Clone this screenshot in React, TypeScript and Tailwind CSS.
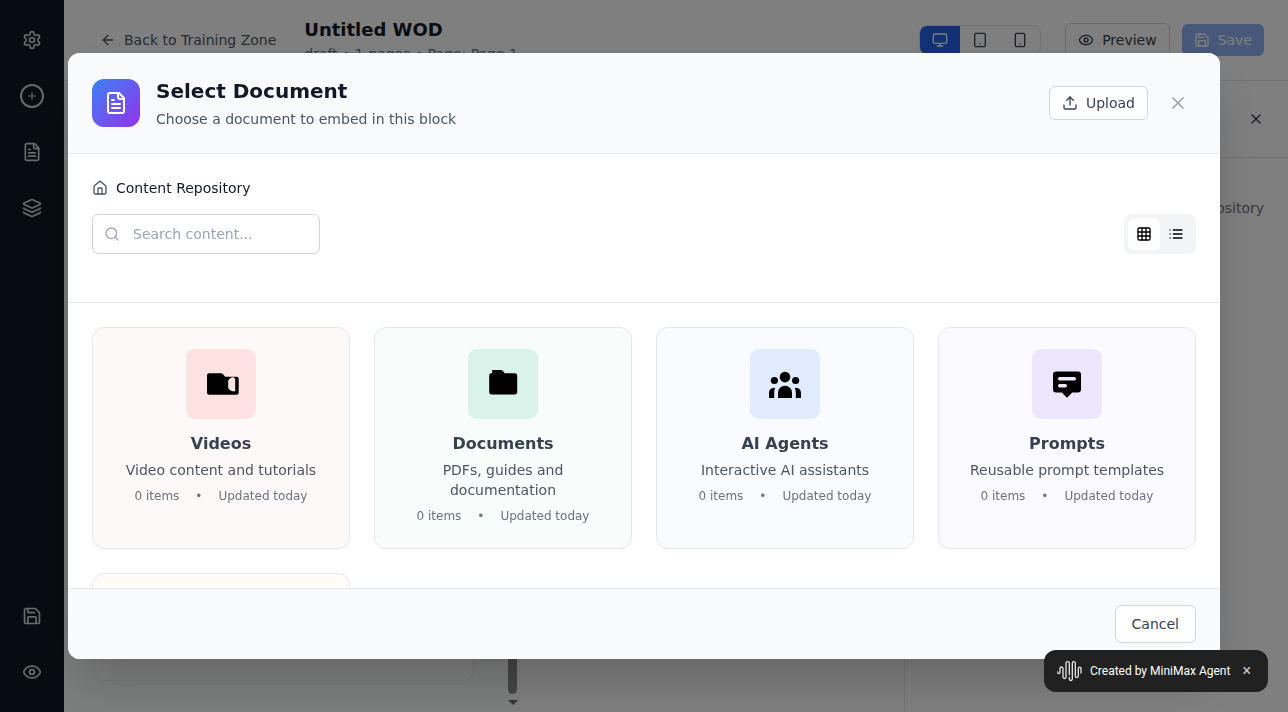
import type { ReactNode } from "react";
import {
  ArrowLeft,
  Eye,
  Grid3x3,
  House,
  Layers,
  Monitor,
  Plus,
  Save,
  Search,
  Smartphone,
  Tablet,
  Upload,
  X,
} from "lucide-react";

function StrokeIcon({ size, children }: { size: number; children: ReactNode }) {
  return (
    <svg
      width={size}
      height={size}
      viewBox="0 0 24 24"
      fill="none"
      stroke="currentColor"
      strokeWidth="2"
      strokeLinecap="round"
      strokeLinejoin="round"
    >
      {children}
    </svg>
  );
}

function FileIcon({ size }: { size: number }) {
  return (
    <StrokeIcon size={size}>
      <path d="M15 2H6a2 2 0 0 0-2 2v16a2 2 0 0 0 2 2h12a2 2 0 0 0 2-2V7Z" />
      <path d="M14 2v4a2 2 0 0 0 2 2h4" />
      <path d="M10 9H8" />
      <path d="M16 13H8" />
      <path d="M16 17H8" />
    </StrokeIcon>
  );
}

function GearIcon({ size }: { size: number }) {
  return (
    <StrokeIcon size={size}>
      <path d="M12.22 2h-.44a2 2 0 0 0-2 2v.18a2 2 0 0 1-1 1.73l-.43.25a2 2 0 0 1-2 0l-.15-.08a2 2 0 0 0-2.73.73l-.22.38a2 2 0 0 0 .73 2.73l.15.1a2 2 0 0 1 1 1.72v.51a2 2 0 0 1-1 1.74l-.15.09a2 2 0 0 0-.73 2.73l.22.38a2 2 0 0 0 2.73.73l.15-.08a2 2 0 0 1 2 0l.43.25a2 2 0 0 1 1 1.73V20a2 2 0 0 0 2 2h.44a2 2 0 0 0 2-2v-.18a2 2 0 0 1 1-1.73l.43-.25a2 2 0 0 1 2 0l.15.08a2 2 0 0 0 2.73-.73l.22-.39a2 2 0 0 0-.73-2.73l-.15-.08a2 2 0 0 1-1-1.74v-.5a2 2 0 0 1 1-1.74l.15-.09a2 2 0 0 0 .73-2.73l-.22-.38a2 2 0 0 0-2.73-.73l-.15.08a2 2 0 0 1-2 0l-.43-.25a2 2 0 0 1-1-1.73V4a2 2 0 0 0-2-2z" />
      <circle cx="12" cy="12" r="3" />
    </StrokeIcon>
  );
}

function ListIcon({ size }: { size: number }) {
  return (
    <StrokeIcon size={size}>
      <path d="M8 6h13M8 12h13M8 18h13M3 6h.01M3 12h.01M3 18h.01" />
    </StrokeIcon>
  );
}

function VideosIcon() {
  return (
    <path
      fillRule="evenodd"
      d="M23.2 24.300h11.900q1.200 0 2 .9l2 2.500h11.600q2 0 2 2v14q0 2-2 2h-27.500q-2.200 0-2.200-2V26.300q0-2 2.200-2zM46 28.200q-2.300 1-3.800 3.200v7.800q1.500 2.200 3.800 3h3.200V30.200q-.8-1.600-1.800-2z"
    />
  );
}

function DocumentsIcon() {
  return (
    <path d="M24.2 21h8.800q1 0 1.700.8l2 2.500h10q2.500 0 2.500 2.300v16.600q0 2.300-2.500 2.300h-23q-2.500 0-2.500-2.300V26.600q0-2.300 2-2.300h1z" />
  );
}

function AgentsIcon() {
  return (
    <>
      <circle cx="35" cy="28.1" r="5.3" />
      <circle cx="24.4" cy="31.5" r="3.6" />
      <circle cx="45.6" cy="31.5" r="3.6" />
      <path d="M28 49v-5.3a7 7 0 0 1 14 0V49z" />
      <path d="M19 49v-5q0-5.200 6.200-5.200q-1 2.200-1 4.900V49z" />
      <path d="M51 49v-5q0-5.200-6.200-5.200q1 2.200 1 4.900V49z" />
    </>
  );
}

function PromptsIcon() {
  return (
    <path
      fillRule="evenodd"
      d="M24 22.500h22q3 0 3 3v15q0 3-3 3h-5.700L35 48.800l-5.200-5.300H24q-3 0-3-3v-15q0-3 3-3zM27.700 28a1.750 1.750 0 0 0 0 3.500h14.600a1.750 1.750 0 0 0 0-3.500zM27.700 35a1.750 1.750 0 0 0 0 3.500h5.600a1.750 1.750 0 0 0 0-3.500z"
    />
  );
}

type Folder = {
  title: string;
  text: string;
  card: string;
  tile: string;
  icon: ReactNode;
};

const folders: Folder[] = [
  { title: "Videos", text: "Video content and tutorials", card: "bg-[#fdf9f9]", tile: "bg-[#fee2e2]", icon: <VideosIcon /> },
  { title: "Documents", text: "PDFs, guides and documentation", card: "bg-[#f8fcfb]", tile: "bg-[#daf3ea]", icon: <DocumentsIcon /> },
  { title: "AI Agents", text: "Interactive AI assistants", card: "bg-[#fafbff]", tile: "bg-[#e0ebfe]", icon: <AgentsIcon /> },
  { title: "Prompts", text: "Reusable prompt templates", card: "bg-[#fbfaff]", tile: "bg-[#ede7fe]", icon: <PromptsIcon /> },
];

function FolderCard({ folder }: { folder: Folder }) {
  return (
    <div className={`flex flex-col items-center rounded-xl border border-[#e5e7eb] px-6 pt-[21px] pb-6 text-center ${folder.card}`}>
      <div className={`h-[70px] w-[70px] shrink-0 rounded-[9px] ${folder.tile}`}>
        <svg viewBox="0 0 70 70" className="h-full w-full fill-black">
          {folder.icon}
        </svg>
      </div>
      <h3 className="mt-[13px] text-base font-semibold text-[#374151]">{folder.title}</h3>
      <p className="mt-1 text-sm text-[#4b5563]">{folder.text}</p>
      <div className="mt-2 flex gap-4 text-xs text-[#6b7280]">
        <span>0 items</span>
        <span>•</span>
        <span>Updated today</span>
      </div>
    </div>
  );
}

function Sidebar() {
  return (
    <aside className="flex w-16 shrink-0 flex-col items-center justify-between bg-[#0f1727] py-5 text-[#d1d5db]">
      <div className="flex flex-col gap-4">
        <button className="flex h-10 w-10 items-center justify-center"><GearIcon size={20} /></button>
        <button className="flex h-10 w-10 items-center justify-center">
          <span className="flex h-6 w-6 items-center justify-center rounded-full border-2 border-current">
            <Plus size={12} />
          </span>
        </button>
        <button className="flex h-10 w-10 items-center justify-center"><FileIcon size={20} /></button>
        <button className="flex h-10 w-10 items-center justify-center"><Layers size={20} /></button>
      </div>
      <div className="flex flex-col gap-4">
        <button className="flex h-10 w-10 items-center justify-center"><Save size={20} /></button>
        <button className="flex h-10 w-10 items-center justify-center"><Eye size={20} /></button>
      </div>
    </aside>
  );
}

function TopBar() {
  return (
    <header className="flex h-[81px] shrink-0 items-center justify-between border-b border-[#e5e7eb] bg-white px-6">
      <div className="flex items-center gap-4">
        <button className="flex items-center gap-2 px-3 text-sm text-[#4b5563]">
          <ArrowLeft size={16} />
          Back to Training Zone
        </button>
        <div>
          <h1 className="text-lg leading-7 font-semibold text-[#111827]">Untitled WOD</h1>
          <p className="text-sm text-[#6b7280]">draft • 1 pages • Page: Page 1</p>
        </div>
      </div>
      <div className="flex items-center text-sm text-[#374151]">
        <div className="mr-6 flex overflow-hidden rounded-lg border border-[#e5e7eb]">
          <button className="bg-[#2563eb] px-3 py-1.5 text-white"><Monitor size={16} /></button>
          <button className="px-3 py-1.5"><Tablet size={16} /></button>
          <button className="px-3 py-1.5"><Smartphone size={16} /></button>
        </div>
        <button className="mr-3 flex items-center gap-2 rounded-md border border-[#d1d5db] px-3 py-1.5">
          <Eye size={16} />
          Preview
        </button>
        <button className="flex items-center gap-2 rounded-md bg-[#2563eb] px-3 py-1.5 text-white opacity-50">
          <Save size={16} />
          Save
        </button>
      </div>
    </header>
  );
}

function Workspace() {
  return (
    <div className="flex min-h-0 flex-1">
      <section className="flex w-[456px] bg-[#f9fafb]">
        <div className="flex flex-1 flex-col pt-6 pr-8 pb-[31px] pl-[31px]">
          <div className="flex-1 rounded-lg border border-[#f0f1f3] bg-white" />
        </div>
        <div className="flex w-[15px] flex-col items-center justify-end gap-[6px] bg-[#fafafa] pb-[7px]">
          <div className="w-[9px] flex-1 rounded-full bg-[#8b8b8b]" />
          <svg width="10" height="5" viewBox="0 0 10 5" className="fill-[#6b6b6b]">
            <path d="M0 0h10L5 5z" />
          </svg>
        </div>
      </section>
      <section className="flex-1 bg-white" />
      <aside className="w-96 border-l border-[#e5e7eb] bg-white">
        <div className="flex h-[77px] items-center justify-end border-b border-[#e5e7eb] px-6 text-[#374151]">
          <X size={16} />
        </div>
        <p className="px-6 pt-10 text-right text-sm text-[#6b7280]">Content Repository</p>
      </aside>
    </div>
  );
}

function DocumentDialog() {
  return (
    <div role="dialog" className="flex h-[85vh] w-full max-w-6xl flex-col overflow-hidden rounded-xl bg-white shadow-2xl">
      <div className="flex shrink-0 items-center justify-between border-b border-[#e5e7eb] bg-[#f9fafb] p-6">
        <div className="flex items-center gap-4">
          <div className="flex h-12 w-12 items-center justify-center rounded-xl bg-linear-to-br/srgb from-[#3b82f6] to-[#9333ea] text-white">
            <FileIcon size={24} />
          </div>
          <div>
            <h2 className="text-xl font-semibold text-[#111827]">Select Document</h2>
            <p className="mt-1 text-sm text-[#4b5563]">Choose a document to embed in this block</p>
          </div>
        </div>
        <div className="flex items-center gap-3">
          <button className="flex items-center gap-2 rounded-md border border-[#d1d5db] bg-white px-3 py-1.5 text-sm text-[#374151]">
            <Upload size={16} />
            Upload
          </button>
          <button className="p-2 text-[#9ca3af]"><X size={20} /></button>
        </div>
      </div>

      <div className="shrink-0 border-b border-[#e5e7eb] p-6">
        <div className="mb-4 flex items-center gap-2 text-sm text-[#111827]">
          <House size={16} className="text-[#4b5563]" />
          Content Repository
        </div>
        <div className="mb-6 flex items-center justify-between">
          <div className="flex h-10 w-[228px] items-center gap-[13px] rounded-md border border-[#d1d5db] px-[11px] text-sm text-[#9ca3af]">
            <Search size={16} />
            <span>Search content...</span>
          </div>
          <div className="flex rounded-lg bg-[#f3f4f6] p-1 text-black">
            <button className="rounded-md bg-white p-2"><Grid3x3 size={16} /></button>
            <button className="p-2"><ListIcon size={16} /></button>
          </div>
        </div>
      </div>

      <div className="min-h-0 flex-1 overflow-hidden p-6">
        <div className="grid grid-cols-4 gap-6">
          {folders.map((folder) => (
            <FolderCard key={folder.title} folder={folder} />
          ))}
          <div className="h-[222px] rounded-xl border border-[#e5e7eb] bg-[#fffcf7]" />
        </div>
      </div>

      <div className="flex shrink-0 justify-end border-t border-[#e5e7eb] bg-[#f9fafb] px-6 py-4">
        <button className="rounded-md border border-[#d1d5db] bg-white px-4 py-2 text-sm text-[#374151]">Cancel</button>
      </div>
    </div>
  );
}

function AgentBadge() {
  return (
    <div className="fixed right-5 bottom-5 flex h-[42px] w-[224px] items-center rounded-xl bg-[#212121] pl-[13px] font-['Roboto',sans-serif] text-xs text-white">
      <svg width="25" height="22" viewBox="0 0 25 22" fill="none" stroke="#e6e6e6" strokeWidth="1.3" strokeLinecap="round" className="mr-2 shrink-0">
        <path d="M.7 12v.4a1.150 1.150 0 0 0 2.300 0V8.500a1.500 1.500 0 0 1 3 0V17a1.500 1.500 0 0 0 3 0V3.200a1.650 1.650 0 0 1 3.300 0V14.500" />
        <path d="M12.300 17.500V19a1.500 1.500 0 0 0 3 0V3.200a1.500 1.500 0 0 1 3 0V16a1.500 1.500 0 0 0 3 0V8.500a1.350 1.350 0 0 1 2.700 0V13" />
      </svg>
      <span className="whitespace-nowrap">Created by MiniMax Agent</span>
      <span className="ml-3 text-base leading-none text-[#c8c8c8]">×</span>
    </div>
  );
}

export default function App() {
  return (
    <div className="h-screen overflow-hidden font-['DejaVu_Sans',sans-serif]">
      <div className="flex h-full">
        <Sidebar />
        <div className="flex min-w-0 flex-1 flex-col">
          <TopBar />
          <Workspace />
        </div>
      </div>
      <div className="fixed inset-0 flex items-center justify-center bg-black/50 p-4">
        <DocumentDialog />
      </div>
      <AgentBadge />
    </div>
  );
}
